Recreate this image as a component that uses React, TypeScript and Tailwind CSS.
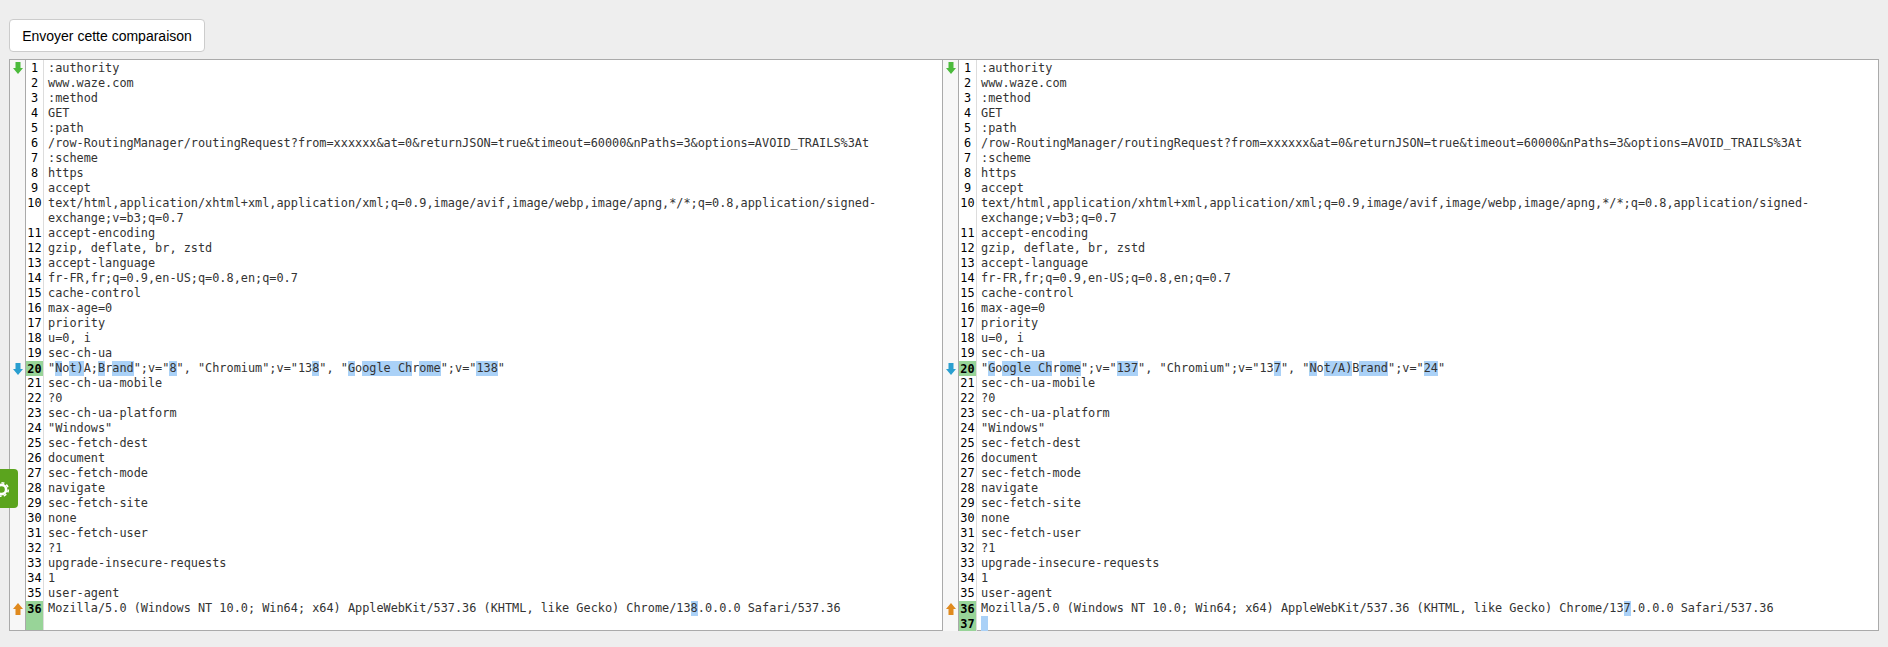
type Seg = string | { hl: string };

const hl = (s: string) => ({ hl: s });

const commonTop: Seg[][] = [
  [":authority"],
  ["www.waze.com"],
  [":method"],
  ["GET"],
  [":path"],
  ["/row-RoutingManager/routingRequest?from=xxxxxx&at=0&returnJSON=true&timeout=60000&nPaths=3&options=AVOID_TRAILS%3At"],
  [":scheme"],
  ["https"],
  ["accept"],
  ["text/html,application/xhtml+xml,application/xml;q=0.9,image/avif,image/webp,image/apng,*/*;q=0.8,application/signed-exchange;v=b3;q=0.7"],
  ["accept-encoding"],
  ["gzip, deflate, br, zstd"],
  ["accept-language"],
  ["fr-FR,fr;q=0.9,en-US;q=0.8,en;q=0.7"],
  ["cache-control"],
  ["max-age=0"],
  ["priority"],
  ["u=0, i"],
  ["sec-ch-ua"],
];

const commonBottom: Seg[][] = [
  ["sec-ch-ua-mobile"],
  ["?0"],
  ["sec-ch-ua-platform"],
  ['"Windows"'],
  ["sec-fetch-dest"],
  ["document"],
  ["sec-fetch-mode"],
  ["navigate"],
  ["sec-fetch-site"],
  ["none"],
  ["sec-fetch-user"],
  ["?1"],
  ["upgrade-insecure-requests"],
  ["1"],
  ["user-agent"],
];

const leftLines: Seg[][] = [
  ...commonTop,
  [
    '"', hl("N"), "o", hl("t)"), "A;", hl("B"), "r", hl("and"),
    '";v="', hl("8"), '", "Chromium";v="13', hl("8"), '", "', hl("G"), "o", hl("ogle Ch"), "r", hl("ome"),
    '";v="', hl("138"), '"',
  ],
  ...commonBottom,
  ["Mozilla/5.0 (Windows NT 10.0; Win64; x64) AppleWebKit/537.36 (KHTML, like Gecko) Chrome/13", hl("8"), ".0.0.0 Safari/537.36"],
];

const rightLines: Seg[][] = [
  ...commonTop,
  [
    '"', hl("G"), "o", hl("ogle Ch"), "r", hl("ome"), '";v="', hl("137"),
    '", "Chromium";v="13', hl("7"), '", "', hl("N"), "o", hl("t/A)"), "B", hl("rand"),
    '";v="', hl("24"), '"',
  ],
  ...commonBottom,
  ["Mozilla/5.0 (Windows NT 10.0; Win64; x64) AppleWebKit/537.36 (KHTML, like Gecko) Chrome/13", hl("7"), ".0.0.0 Safari/537.36"],
  [hl(" ")],
];

function Arrow({ color, up }: { color: string; up?: boolean }) {
  return (
    <svg width="10" height="12" viewBox="0 0 10 12" className={up ? "" : "rotate-180"}>
      <path d="M5 0 L10 6 L7.5 6 L7.5 12 L2.5 12 L2.5 6 L0 6 Z" fill={color} />
    </svg>
  );
}

const markers: Record<number, JSX.Element> = {
  1: <Arrow color="#4cbb3c" />,
  20: <Arrow color="#2a9fd0" />,
  36: <Arrow color="#e08a1e" up />,
};

function DiffPane({ lines, changed, className }: { lines: Seg[][]; changed: number[]; className: string }) {
  return (
    <div className={`min-w-0 flex flex-col bg-white ${className}`}>
      {/* one pixel of the gutter above the first line */}
      <div className="flex h-px shrink-0">
        <div className="w-4 shrink-0 bg-[#f7f7f7] border-r border-[#aaaaaa]" />
        <div className="w-[18px] shrink-0 border-r border-[#dddddd]" />
      </div>
      {lines.map((segs, i) => {
        const n = i + 1;
        const isChanged = changed.includes(n);
        return (
          <div key={n} className="flex">
            <div
              className={`w-4 shrink-0 bg-[#f7f7f7] border-r border-[#aaaaaa] flex justify-center ${
                n === 1 ? "pt-px" : "pt-0.5"
              }`}
            >
              {markers[n]}
            </div>
            <div
              className={`w-[18px] shrink-0 border-r border-[#dddddd] text-center text-black leading-[14px] ${
                isChanged ? "bg-[#98d498] font-bold pt-px" : ""
              }`}
            >
              {n}
            </div>
            <div className="flex-1 min-w-0 pl-1 text-[#333333] whitespace-pre-wrap">
              {segs.map((seg, j) =>
                typeof seg === "string" ? (
                  <span key={j}>{seg}</span>
                ) : (
                  <span key={j} className="inline-block h-[15px] align-top bg-[#aad1f7]">
                    {seg.hl}
                  </span>
                ),
              )}
            </div>
          </div>
        );
      })}
      {/* gutter keeps running down to the bottom of the pane */}
      <div className="flex flex-1">
        <div className="w-4 shrink-0 bg-[#f7f7f7] border-r border-[#aaaaaa]" />
        <div className="w-[18px] shrink-0 bg-[#98d498] border-r border-[#dddddd]" />
        <div className="flex-1" />
      </div>
    </div>
  );
}

export default function App() {
  return (
    <div className="relative min-h-screen bg-[#eeeeee] pt-[19px] px-[9px] font-['Liberation_Sans',sans-serif]">
      <button className="h-[33px] w-[196px] bg-white border border-[#cccccc] rounded text-sm text-black">
        Envoyer cette comparaison
      </button>

      <div className="mt-[7px] flex h-[572px] border border-[#aaaaaa] font-['DejaVu_Sans_Mono',monospace] text-[11.87px] leading-[15px]">
        <DiffPane lines={leftLines} changed={[20, 36]} className="w-[933px] shrink-0 border-r border-[#aaaaaa]" />
        <DiffPane lines={rightLines} changed={[20, 36, 37]} className="flex-1" />
      </div>

      <div className="absolute left-0 top-[469px] w-[18px] h-[39px] bg-[#5ba41e] rounded-r">
        <svg width="18" height="39" viewBox="0 0 18 39">
          <circle cx="1.5" cy="20.5" r="4.6" fill="none" stroke="white" strokeWidth="2.6" />
          <circle cx="1.5" cy="20.5" r="6.8" fill="none" stroke="white" strokeWidth="1.6" strokeDasharray="3 2.3" />
        </svg>
      </div>
    </div>
  );
}
